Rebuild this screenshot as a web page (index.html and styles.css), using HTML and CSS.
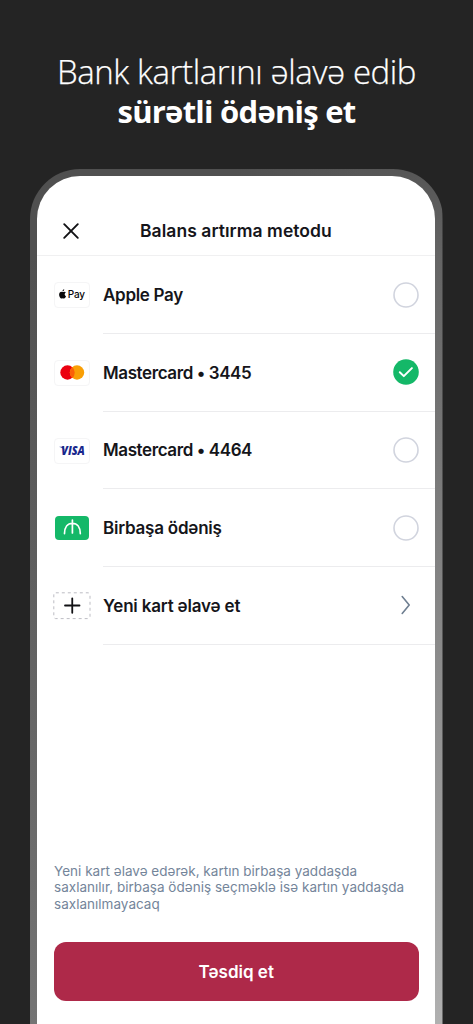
FILE: index.html
```html
<!DOCTYPE html>
<html lang="az">
<head>
<meta charset="utf-8">
<title>Balans artırma metodu</title>
<link rel="stylesheet" href="styles.css">
</head>
<body>
<main class="promo">
  <h1 class="headline"><span class="headline-light">Bank kartlarını əlavə edib</span><strong class="headline-bold">sürətli ödəniş et</strong></h1>
  <section class="phone">
    <div class="screen">
      <header class="topbar">
        <svg class="close" width="18" height="18" viewBox="0 0 18 18"><path d="M2.2 2.2 15.8 15.8M15.8 2.2 2.2 15.8"/></svg>
        <h2 class="title">Balans artırma metodu</h2>
      </header>
      <ul class="methods">
        <li class="method">
          <span class="badge"><svg width="34" height="24" viewBox="0 0 34 24"><path fill="#08080a" d="M10.800 9.600c-.9.600-1.200 1.300-1.100 2 .1.800.5 1.300 1.300 1.700-.5 1.300-1.200 2.200-1.900 2.200-.5 0-.8-.3-1.300-.3s-.9.300-1.400.3c-1.100 0-2.300-2-2.300-3.800 0-1.900 1.100-2.900 2.200-2.900.6 0 1 .3 1.500.3.400 0 1-.4 1.700-.4.500 0 1 .3 1.300.9zM9.200 6.300c.1 1.100-.7 2.100-1.700 2.100-.1-1.100.7-2 1.700-2.100z"/><text class="pay-text" x="12.800" y="15" textLength="17.200">Pay</text></svg></span>
          <div class="method-body"><span class="label label-apple">Apple Pay</span><svg class="radio" width="26" height="26" viewBox="0 0 26 26"><circle cx="13" cy="13" r="12"/></svg></div>
        </li>
        <li class="method">
          <span class="badge"><svg width="34" height="24" viewBox="0 0 34 24"><circle cx="12.500" cy="11.500" r="7.200" fill="#eb0010"/><circle cx="22" cy="11.500" r="7.200" fill="#f99f05"/><path fill="#fb6008" d="M17.250 6.050a7.200 7.200 0 0 1 0 10.900 7.200 7.200 0 0 1 0-10.900z"/></svg></span>
          <div class="method-body"><span class="label label-card">Mastercard • 3445</span><svg class="check" width="26" height="26" viewBox="0 0 26 26"><circle cx="13" cy="13" r="12.800"/><path d="m6.800 13.300 4 3.800 8.100-8"/></svg></div>
        </li>
        <li class="method">
          <span class="badge"><svg width="34" height="24" viewBox="0 0 34 24"><text class="visa-text" x="6.300" y="16" textLength="23.500" lengthAdjust="spacingAndGlyphs">VISA</text><path fill="#18278c" d="M4.500 7.700h4l1.300 4C8.800 9.700 7 8.500 4.500 7.900z"/></svg></span>
          <div class="method-body"><span class="label label-card">Mastercard • 4464</span><svg class="radio" width="26" height="26" viewBox="0 0 26 26"><circle cx="13" cy="13" r="12"/></svg></div>
        </li>
        <li class="method">
          <span class="badge badge-green"><svg width="34" height="24" viewBox="0 0 34 24"><path d="M9.500 17.600c0-6.300 3.100-10.300 7.900-10.300s7.900 4 7.900 10.300M17.400 4v13"/></svg></span>
          <div class="method-body"><span class="label label-direct">Birbaşa ödəniş</span><svg class="radio" width="26" height="26" viewBox="0 0 26 26"><circle cx="13" cy="13" r="12"/></svg></div>
        </li>
        <li class="method">
          <span class="badge badge-new"><svg width="38" height="28" viewBox="0 0 38 28"><rect x=".8" y=".8" width="36.200" height="25.800" rx="2"/><path d="M12 13.500h14.500M19.250 6.300v14.500"/></svg></span>
          <div class="method-body"><span class="label label-new">Yeni kart əlavə et</span><svg class="chevron" width="10" height="20" viewBox="0 0 10 20"><path d="m1.200 1.500 7 8.500-7 8.500"/></svg></div>
        </li>
      </ul>
      <footer class="footer">
        <p class="note">Yeni kart əlavə edərək, kartın birbaşa yaddaşda<br>saxlanılır, birbaşa ödəniş seçməklə isə kartın yaddaşda<br>saxlanılmayacaq</p>
        <button class="confirm" type="button">Təsdiq et</button>
      </footer>
    </div>
  </section>
</main>
</body>
</html>
```
FILE: styles.css
```css
* { box-sizing: border-box; }

body {
  margin: 0;
  background: #242424;
  font-family: Inter, "Liberation Sans", sans-serif;
}

.promo {
  display: flex;
  flex-direction: column;
  height: 1024px;
  padding-left: 30px;
  overflow: hidden;
}

.headline {
  display: flex;
  flex-direction: column;
  align-items: center;
  width: 413px;
  height: 169px;
  margin: 0;
  padding-top: 51px;
  color: #fff;
  font-family: "Open Sans", "Noto Sans", sans-serif;
  font-size: 33px;
  line-height: 41px;
  white-space: nowrap;
}

.headline-light { font-weight: 300; letter-spacing: -0.420px; -webkit-text-stroke: 0.250px #fff; }
.headline-bold { font-size: 31px; font-weight: 700; letter-spacing: -0.750px; line-height: 39px; }

.phone {
  flex: none;
  width: 412.5px;
  height: 855px;
  padding: 7px 7.300px 0 7px;
  border-radius: 50px 50px 0 0;
  background:
    linear-gradient(90deg, #505050, #505050 50%, transparent 80%) left top / 100% 60px no-repeat,
    linear-gradient(#505050, #505050 10%, #747474) left top / 50% 100% no-repeat,
    linear-gradient(#565656, #646464 10%, #858585 50%, #b0b0b0) right top / 50% 100% no-repeat;
}

.screen {
  display: flex;
  flex-direction: column;
  height: 848px;
  border-radius: 43px 43px 0 0;
  background: #fff;
}

.topbar {
  display: flex;
  align-items: center;
  flex: none;
  height: 80.300px;
  padding: 30px 0 0 25px;
  border-bottom: 1.500px solid #f0f0f1;
}

.close { fill: none; stroke: #111114; stroke-width: 1.900; stroke-linecap: round; }

.title {
  margin: 0 0 0 60px;
  color: #15151a;
  font-size: 17.500px;
  font-weight: 600;
  letter-spacing: 0.050px;
  white-space: nowrap;
}

.methods { margin: 0; padding: 0; list-style: none; }

.method {
  display: flex;
  align-items: center;
  height: 77.700px;
  padding-left: 17px;
}

.badge {
  display: flex;
  flex: none;
  align-items: center;
  justify-content: center;
  width: 36px;
  height: 26px;
  border: 1px solid #f5f5f6;
  border-radius: 4px;
}

.badge-green { width: 34px; height: 24px; margin: 0 1px; border: 0; background: #14b868; }
.badge-green path { fill: none; stroke: #fff; stroke-width: 1.700; stroke-linecap: round; }

.badge-new { width: 38px; height: 28px; margin: 0 -1px; border: 0; }
.badge-new rect { fill: none; stroke: #bdbdc4; stroke-width: 1; stroke-dasharray: 3 3; }
.badge-new path { stroke: #111114; stroke-width: 1.800; stroke-linecap: round; }

.pay-text { font-family: Inter, sans-serif; font-size: 10px; font-weight: 500; fill: #08080a; }
.visa-text { font-family: "Open Sans", sans-serif; font-size: 11.500px; font-style: italic; font-weight: 800; fill: #18278c; }

.method-body {
  display: flex;
  flex: 1;
  align-items: center;
  justify-content: space-between;
  height: 100%;
  margin-left: 13px;
  padding-right: 16.700px;
  border-bottom: 1px solid #ececee;
}

.label {
  padding-top: 0.500px;
  color: #15151a;
  font-size: 17px;
  font-weight: 600;
  white-space: nowrap;
}

.label-apple { letter-spacing: -0.300px; }
.label-card { letter-spacing: -0.400px; }
.label-direct { letter-spacing: -0.220px; }
.label-new { letter-spacing: -0.180px; }

.radio { fill: none; stroke: #d1d4de; stroke-width: 1.600; }

.check circle { fill: #14b868; }
.check path { fill: none; stroke: #fff; stroke-width: 2; stroke-linecap: round; stroke-linejoin: round; }

.chevron { margin-right: 7.500px; fill: none; stroke: #6f7f91; stroke-width: 1.600; stroke-linecap: round; stroke-linejoin: round; }

.footer { margin-top: auto; padding: 0 16.700px 23px 17px; }

.note {
  margin: 0 0 30px;
  color: #74859a;
  font-size: 13.500px;
  line-height: 16.400px;
  letter-spacing: 0.020px;
  white-space: nowrap;
}

.confirm {
  display: block;
  width: 100%;
  height: 59px;
  border: 0;
  border-radius: 12px;
  background: #ae2949;
  color: #fff;
  font: 600 17px Inter, sans-serif;
}
```
